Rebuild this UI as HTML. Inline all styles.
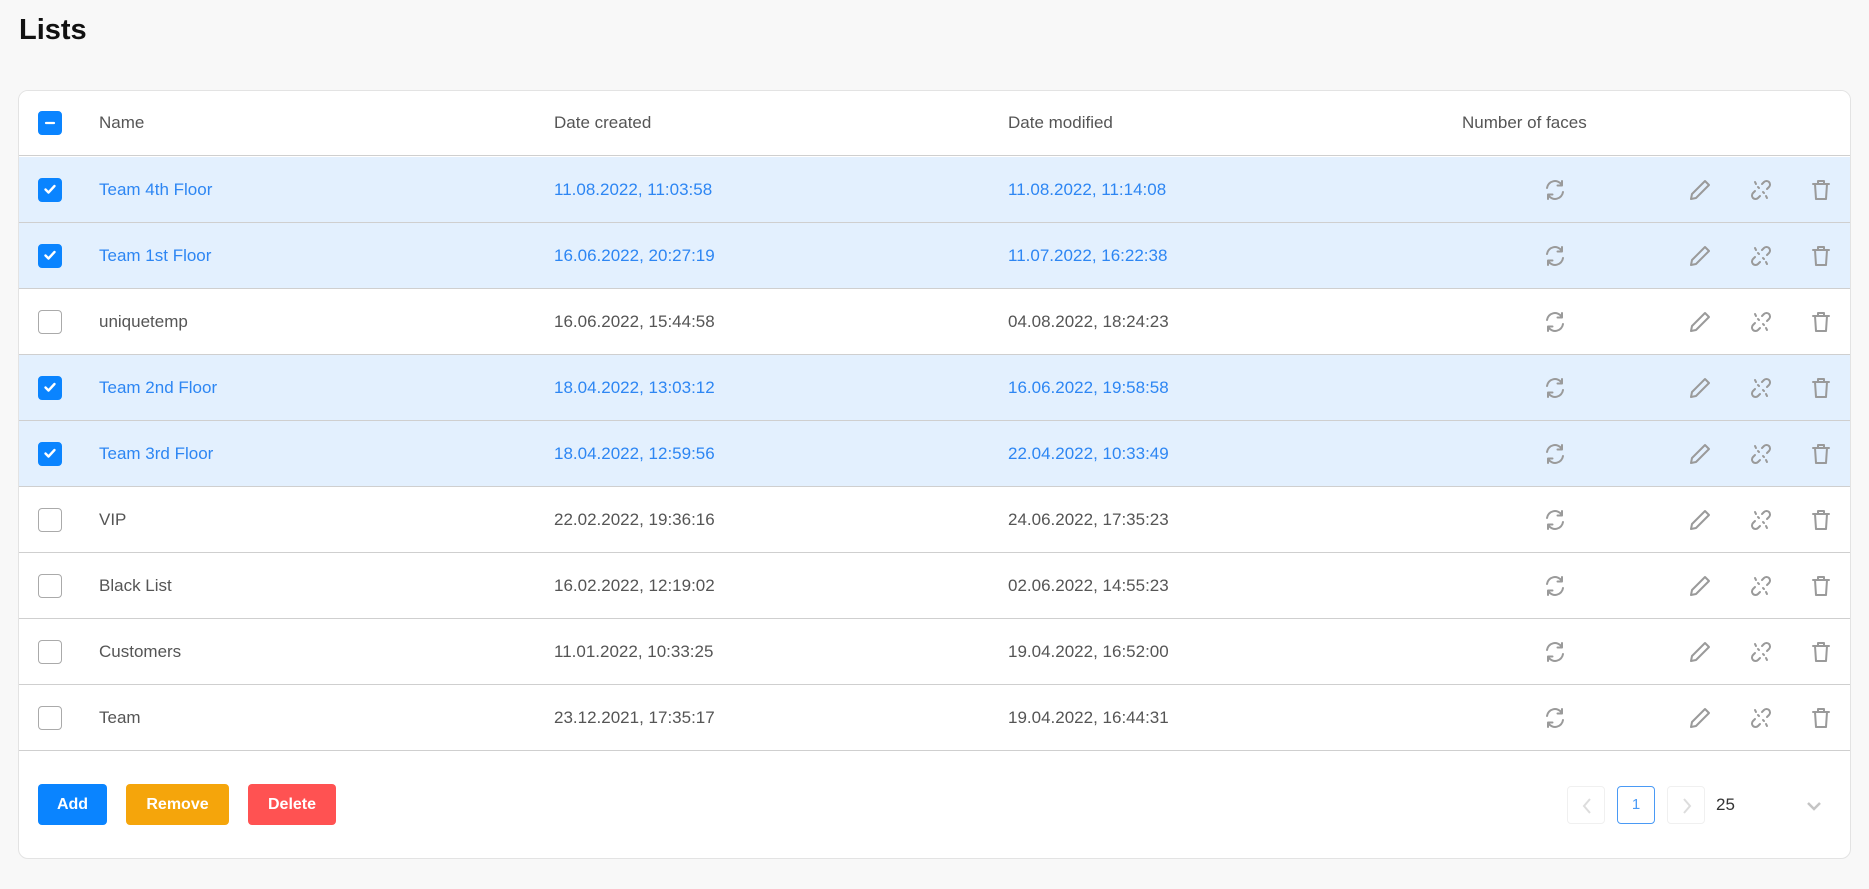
<!DOCTYPE html>
<html><head><meta charset="utf-8"><style>
*{box-sizing:border-box;margin:0;padding:0}
body{width:1869px;height:889px;background:#f8f8f8;font-family:"Liberation Sans",sans-serif;position:relative;overflow:hidden}
h1{position:absolute;left:19px;top:14px;font-size:29px;font-weight:bold;color:#111}
.card{position:absolute;left:18px;top:90px;width:1833px;height:769px;background:#fff;border:1px solid #e3e3e3;border-radius:10px;overflow:hidden}
.row{position:absolute;left:0;width:1831px;height:66px;border-bottom:1px solid #cfcfcf;font-size:17px;color:#555}
.row.sel{background:#e3f0fe;color:#2d86f3}
.row span{position:absolute;top:50%;transform:translateY(-50%);white-space:nowrap}
.hd{top:0;height:65px;background:#fff;color:#555}
.cb{position:absolute;left:19px;top:50%;margin-top:-12px;width:24px;height:24px;border-radius:4px;border:1.5px solid #aaa;background:#fff}
.cb.on{background:#0a84ff;border-color:#0a84ff}
.cb svg{position:absolute;left:-1.5px;top:-1.5px}
.ic{position:absolute;left:0;top:50%;margin-top:-12px}
.btn{position:absolute;top:693px;height:41px;border-radius:4px;color:#fff;font-weight:bold;font-size:16px;text-align:center;line-height:41px}
.pg{position:absolute;top:695px;width:38px;height:38px;border:1px solid #f0f0f0;border-radius:4px}
</style></head><body>
<h1>Lists</h1>
<div class="card">
<div class="row hd"><div class="cb on"><svg width="24" height="24"><path d="M8 12h8" stroke="#fff" stroke-width="2.2" stroke-linecap="round"/></svg></div>
<span style="left:80px">Name</span><span style="left:535px">Date created</span><span style="left:989px">Date modified</span><span style="left:1443px">Number of faces</span></div>

<div class="row sel" style="top:66px"><div class="cb on"><svg width="24" height="24"><path d="M7.5 12.5l3 3 6-6.5" fill="none" stroke="#fff" stroke-width="2.4" stroke-linecap="round" stroke-linejoin="round"/></svg></div><span style="left:80px">Team 4th Floor</span><span style="left:535px">11.08.2022, 11:03:58</span><span style="left:989px">11.08.2022, 11:14:08</span><svg class="ic" width="1831" height="24"><g fill="none" stroke="#9a9a9a" stroke-width="2" stroke-linecap="round" stroke-linejoin="round"><g transform="translate(1524,0)"><path d="M4 10a8 8 0 0 1 14.5-3.5M20 14a8 8 0 0 1-14.5 3.5"/><path d="M19 3v4.5h-4.5M5 21v-4.5h4.5"/></g><g transform="translate(1669,0)"><path d="M17 3l4 4L8 20l-5 1 1-5z"/></g><g transform="translate(1730,0)"><path d="M13 6l2-2a3.5 3.5 0 0 1 5 5l-2 2M11 18l-2 2a3.5 3.5 0 0 1-5-5l2-2M9 9l1 1M14 14l1 1M6 4l1 2M18 20l-1-2"/></g><g transform="translate(1790,0)"><path d="M4 6h16M9 6V3h6v3M6 6l1 15h10l1-15"/></g></g></svg></div>

<div class="row sel" style="top:132px"><div class="cb on"><svg width="24" height="24"><path d="M7.5 12.5l3 3 6-6.5" fill="none" stroke="#fff" stroke-width="2.4" stroke-linecap="round" stroke-linejoin="round"/></svg></div><span style="left:80px">Team 1st Floor</span><span style="left:535px">16.06.2022, 20:27:19</span><span style="left:989px">11.07.2022, 16:22:38</span><svg class="ic" width="1831" height="24"><g fill="none" stroke="#9a9a9a" stroke-width="2" stroke-linecap="round" stroke-linejoin="round"><g transform="translate(1524,0)"><path d="M4 10a8 8 0 0 1 14.5-3.5M20 14a8 8 0 0 1-14.5 3.5"/><path d="M19 3v4.5h-4.5M5 21v-4.5h4.5"/></g><g transform="translate(1669,0)"><path d="M17 3l4 4L8 20l-5 1 1-5z"/></g><g transform="translate(1730,0)"><path d="M13 6l2-2a3.5 3.5 0 0 1 5 5l-2 2M11 18l-2 2a3.5 3.5 0 0 1-5-5l2-2M9 9l1 1M14 14l1 1M6 4l1 2M18 20l-1-2"/></g><g transform="translate(1790,0)"><path d="M4 6h16M9 6V3h6v3M6 6l1 15h10l1-15"/></g></g></svg></div>

<div class="row" style="top:198px"><div class="cb"></div><span style="left:80px">uniquetemp</span><span style="left:535px">16.06.2022, 15:44:58</span><span style="left:989px">04.08.2022, 18:24:23</span><svg class="ic" width="1831" height="24"><g fill="none" stroke="#9a9a9a" stroke-width="2" stroke-linecap="round" stroke-linejoin="round"><g transform="translate(1524,0)"><path d="M4 10a8 8 0 0 1 14.5-3.5M20 14a8 8 0 0 1-14.5 3.5"/><path d="M19 3v4.5h-4.5M5 21v-4.5h4.5"/></g><g transform="translate(1669,0)"><path d="M17 3l4 4L8 20l-5 1 1-5z"/></g><g transform="translate(1730,0)"><path d="M13 6l2-2a3.5 3.5 0 0 1 5 5l-2 2M11 18l-2 2a3.5 3.5 0 0 1-5-5l2-2M9 9l1 1M14 14l1 1M6 4l1 2M18 20l-1-2"/></g><g transform="translate(1790,0)"><path d="M4 6h16M9 6V3h6v3M6 6l1 15h10l1-15"/></g></g></svg></div>

<div class="row sel" style="top:264px"><div class="cb on"><svg width="24" height="24"><path d="M7.5 12.5l3 3 6-6.5" fill="none" stroke="#fff" stroke-width="2.4" stroke-linecap="round" stroke-linejoin="round"/></svg></div><span style="left:80px">Team 2nd Floor</span><span style="left:535px">18.04.2022, 13:03:12</span><span style="left:989px">16.06.2022, 19:58:58</span><svg class="ic" width="1831" height="24"><g fill="none" stroke="#9a9a9a" stroke-width="2" stroke-linecap="round" stroke-linejoin="round"><g transform="translate(1524,0)"><path d="M4 10a8 8 0 0 1 14.5-3.5M20 14a8 8 0 0 1-14.5 3.5"/><path d="M19 3v4.5h-4.5M5 21v-4.5h4.5"/></g><g transform="translate(1669,0)"><path d="M17 3l4 4L8 20l-5 1 1-5z"/></g><g transform="translate(1730,0)"><path d="M13 6l2-2a3.5 3.5 0 0 1 5 5l-2 2M11 18l-2 2a3.5 3.5 0 0 1-5-5l2-2M9 9l1 1M14 14l1 1M6 4l1 2M18 20l-1-2"/></g><g transform="translate(1790,0)"><path d="M4 6h16M9 6V3h6v3M6 6l1 15h10l1-15"/></g></g></svg></div>

<div class="row sel" style="top:330px"><div class="cb on"><svg width="24" height="24"><path d="M7.5 12.5l3 3 6-6.5" fill="none" stroke="#fff" stroke-width="2.4" stroke-linecap="round" stroke-linejoin="round"/></svg></div><span style="left:80px">Team 3rd Floor</span><span style="left:535px">18.04.2022, 12:59:56</span><span style="left:989px">22.04.2022, 10:33:49</span><svg class="ic" width="1831" height="24"><g fill="none" stroke="#9a9a9a" stroke-width="2" stroke-linecap="round" stroke-linejoin="round"><g transform="translate(1524,0)"><path d="M4 10a8 8 0 0 1 14.5-3.5M20 14a8 8 0 0 1-14.5 3.5"/><path d="M19 3v4.5h-4.5M5 21v-4.5h4.5"/></g><g transform="translate(1669,0)"><path d="M17 3l4 4L8 20l-5 1 1-5z"/></g><g transform="translate(1730,0)"><path d="M13 6l2-2a3.5 3.5 0 0 1 5 5l-2 2M11 18l-2 2a3.5 3.5 0 0 1-5-5l2-2M9 9l1 1M14 14l1 1M6 4l1 2M18 20l-1-2"/></g><g transform="translate(1790,0)"><path d="M4 6h16M9 6V3h6v3M6 6l1 15h10l1-15"/></g></g></svg></div>

<div class="row" style="top:396px"><div class="cb"></div><span style="left:80px">VIP</span><span style="left:535px">22.02.2022, 19:36:16</span><span style="left:989px">24.06.2022, 17:35:23</span><svg class="ic" width="1831" height="24"><g fill="none" stroke="#9a9a9a" stroke-width="2" stroke-linecap="round" stroke-linejoin="round"><g transform="translate(1524,0)"><path d="M4 10a8 8 0 0 1 14.5-3.5M20 14a8 8 0 0 1-14.5 3.5"/><path d="M19 3v4.5h-4.5M5 21v-4.5h4.5"/></g><g transform="translate(1669,0)"><path d="M17 3l4 4L8 20l-5 1 1-5z"/></g><g transform="translate(1730,0)"><path d="M13 6l2-2a3.5 3.5 0 0 1 5 5l-2 2M11 18l-2 2a3.5 3.5 0 0 1-5-5l2-2M9 9l1 1M14 14l1 1M6 4l1 2M18 20l-1-2"/></g><g transform="translate(1790,0)"><path d="M4 6h16M9 6V3h6v3M6 6l1 15h10l1-15"/></g></g></svg></div>

<div class="row" style="top:462px"><div class="cb"></div><span style="left:80px">Black List</span><span style="left:535px">16.02.2022, 12:19:02</span><span style="left:989px">02.06.2022, 14:55:23</span><svg class="ic" width="1831" height="24"><g fill="none" stroke="#9a9a9a" stroke-width="2" stroke-linecap="round" stroke-linejoin="round"><g transform="translate(1524,0)"><path d="M4 10a8 8 0 0 1 14.5-3.5M20 14a8 8 0 0 1-14.5 3.5"/><path d="M19 3v4.5h-4.5M5 21v-4.5h4.5"/></g><g transform="translate(1669,0)"><path d="M17 3l4 4L8 20l-5 1 1-5z"/></g><g transform="translate(1730,0)"><path d="M13 6l2-2a3.5 3.5 0 0 1 5 5l-2 2M11 18l-2 2a3.5 3.5 0 0 1-5-5l2-2M9 9l1 1M14 14l1 1M6 4l1 2M18 20l-1-2"/></g><g transform="translate(1790,0)"><path d="M4 6h16M9 6V3h6v3M6 6l1 15h10l1-15"/></g></g></svg></div>

<div class="row" style="top:528px"><div class="cb"></div><span style="left:80px">Customers</span><span style="left:535px">11.01.2022, 10:33:25</span><span style="left:989px">19.04.2022, 16:52:00</span><svg class="ic" width="1831" height="24"><g fill="none" stroke="#9a9a9a" stroke-width="2" stroke-linecap="round" stroke-linejoin="round"><g transform="translate(1524,0)"><path d="M4 10a8 8 0 0 1 14.5-3.5M20 14a8 8 0 0 1-14.5 3.5"/><path d="M19 3v4.5h-4.5M5 21v-4.5h4.5"/></g><g transform="translate(1669,0)"><path d="M17 3l4 4L8 20l-5 1 1-5z"/></g><g transform="translate(1730,0)"><path d="M13 6l2-2a3.5 3.5 0 0 1 5 5l-2 2M11 18l-2 2a3.5 3.5 0 0 1-5-5l2-2M9 9l1 1M14 14l1 1M6 4l1 2M18 20l-1-2"/></g><g transform="translate(1790,0)"><path d="M4 6h16M9 6V3h6v3M6 6l1 15h10l1-15"/></g></g></svg></div>

<div class="row" style="top:594px"><div class="cb"></div><span style="left:80px">Team</span><span style="left:535px">23.12.2021, 17:35:17</span><span style="left:989px">19.04.2022, 16:44:31</span><svg class="ic" width="1831" height="24"><g fill="none" stroke="#9a9a9a" stroke-width="2" stroke-linecap="round" stroke-linejoin="round"><g transform="translate(1524,0)"><path d="M4 10a8 8 0 0 1 14.5-3.5M20 14a8 8 0 0 1-14.5 3.5"/><path d="M19 3v4.5h-4.5M5 21v-4.5h4.5"/></g><g transform="translate(1669,0)"><path d="M17 3l4 4L8 20l-5 1 1-5z"/></g><g transform="translate(1730,0)"><path d="M13 6l2-2a3.5 3.5 0 0 1 5 5l-2 2M11 18l-2 2a3.5 3.5 0 0 1-5-5l2-2M9 9l1 1M14 14l1 1M6 4l1 2M18 20l-1-2"/></g><g transform="translate(1790,0)"><path d="M4 6h16M9 6V3h6v3M6 6l1 15h10l1-15"/></g></g></svg></div>

<div class="btn" style="left:19px;width:69px;background:#0a84ff">Add</div>
<div class="btn" style="left:107px;width:103px;background:#f5a50b">Remove</div>
<div class="btn" style="left:229px;width:88px;background:#ff5252">Delete</div>

<div class="pg" style="left:1548px"><svg width="38" height="38"><path d="M22 12l-6 7 6 7" fill="none" stroke="#ddd" stroke-width="2"/></svg></div>
<div class="pg" style="left:1598px;border:1.5px solid #4a9af5;color:#4a9af5;font-size:15px;text-align:center;line-height:35px">1</div>
<div class="pg" style="left:1648px"><svg width="38" height="38"><path d="M16 12l6 7-6 7" fill="none" stroke="#ddd" stroke-width="2"/></svg></div>
<div style="position:absolute;left:1697px;top:704px;font-size:17px;color:#333">25</div>
<svg style="position:absolute;left:1786px;top:706px" width="18" height="18"><path d="M3 6l6 6 6-6" fill="none" stroke="#c4c4c4" stroke-width="2.5"/></svg>
</div>
</body></html>
